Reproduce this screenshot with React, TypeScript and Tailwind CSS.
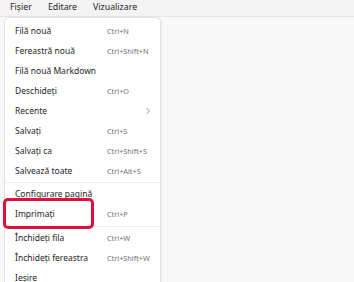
import React from "react";

type Item =
  | { kind: "item"; label: string; shortcut?: string; chevron?: boolean }
  | { kind: "sep"; h: number };

const items: Item[] = [
  { kind: "item", label: "Filă nouă", shortcut: "Ctrl+N" },
  { kind: "item", label: "Fereastră nouă", shortcut: "Ctrl+Shift+N" },
  { kind: "item", label: "Filă nouă Markdown" },
  { kind: "item", label: "Deschideți", shortcut: "Ctrl+O" },
  { kind: "item", label: "Recente", chevron: true },
  { kind: "item", label: "Salvați", shortcut: "Ctrl+S" },
  { kind: "item", label: "Salvați ca", shortcut: "Ctrl+Shift+S" },
  { kind: "item", label: "Salvează toate", shortcut: "Ctrl+Alt+S" },
  { kind: "sep", h: 3 },
  { kind: "item", label: "Configurare pagină" },
  { kind: "item", label: "Imprimați", shortcut: "Ctrl+P" },
  { kind: "sep", h: 4 },
  { kind: "item", label: "Închideți fila", shortcut: "Ctrl+W" },
  { kind: "item", label: "Închideți fereastra", shortcut: "Ctrl+Shift+W" },
  { kind: "item", label: "Ieșire" },
];

export default function App() {
  return (
    <div
      className="relative w-[354px] h-[282px] overflow-hidden bg-[#f9f9f9] flex flex-col"
      style={{ fontFamily: '"Noto Sans", "Open Sans", sans-serif' }}
    >
      <div className="h-[17px] shrink-0 bg-[#f3f3f3] border-b border-[#e6e6e6] flex items-center pl-[10px] gap-[16px] text-[8.8px] text-[#262626]">
        <span>Fișier</span>
        <span>Editare</span>
        <span>Vizualizare</span>
      </div>
      <div className="flex-1" />

      <div className="absolute left-[4px] top-[17px] w-[157px] h-[280px] bg-white border border-[#e2e2e2] rounded-t-[5px] shadow-[1px_1px_3px_rgba(0,0,0,0.06)] pt-[3px] flex flex-col">
        {items.map((it, i) =>
          it.kind === "sep" ? (
            <div key={i} className="flex items-center" style={{ height: it.h }}>
              <div className="w-full h-px bg-[#ececec]" />
            </div>
          ) : (
            <div
              key={i}
              className="h-[20px] shrink-0 flex items-center pl-[10px] text-[8.5px] text-[#262626]"
            >
              <span className="w-[92px] whitespace-nowrap">{it.label}</span>
              {it.shortcut && (
                <span className="text-[7.3px] text-[#707070] whitespace-nowrap">
                  {it.shortcut}
                </span>
              )}
              {it.chevron && (
                <svg width="6" height="8" viewBox="0 0 6 8" className="ml-[38px]">
                  <path d="M1.5 1 L4.5 4 L1.5 7" fill="none" stroke="#8a8a8a" strokeWidth="0.9" />
                </svg>
              )}
            </div>
          )
        )}
      </div>

      <div className="absolute left-[3px] top-[198px] w-[91px] h-[31px] border-[3px] border-[#e0103e] rounded-[5px]" />
    </div>
  );
}
